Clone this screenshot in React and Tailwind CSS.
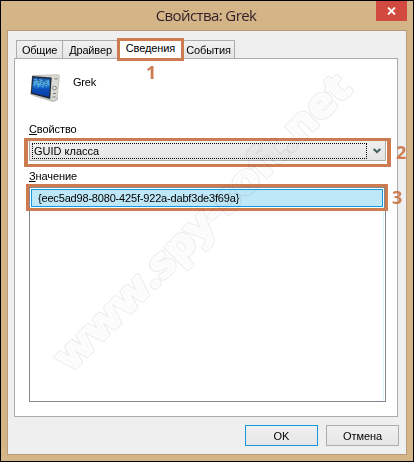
import React from "react";

const ui = "font-['Liberation_Sans',sans-serif] text-[11px] leading-[14px] text-black whitespace-nowrap";

function DeviceIcon() {
  return (
    <svg width="30" height="30" viewBox="0 0 30 30" className="block">
      <defs>
        <linearGradient id="screen" x1="0" y1="0" x2="0" y2="1">
          <stop offset="0" stopColor="#174c9c" />
          <stop offset="0.4" stopColor="#2a86d6" />
          <stop offset="0.6" stopColor="#0c50b8" />
          <stop offset="1" stopColor="#083aa6" />
        </linearGradient>
      </defs>
      <path d="M3 22l20 6 5-2v-3z" fill="#c4c4c4" />
      <path d="M2.5 1.5L28 .8q1.5 0 1.3 2L27 25l-3 2L.8 20.5z" fill="#dadad4" stroke="#b0b0aa" strokeWidth="0.7" />
      <path d="M2.2 2l19.5 1.4L20.2 25 .8 19.8z" fill="#202634" />
      <path d="M3.2 3.2l17 1.5L19 23 2 18.4z" fill="url(#screen)" />
      <path d="M4 4.5h3v2h2V5h4v3h2V6h4v6l-2-2v3l-3-3-1 4-3-3-2 3-1-5-3 3z" fill="#64bce5" opacity="0.7" />
      <path d="M5 4v4m4-4v6m3-5v8m4-7v6" stroke="#102c70" strokeWidth="1" strokeDasharray="1 1" />
      <circle cx="24.5" cy="14" r="1.8" fill="#f2f2ee" stroke="#777" />
      <path d="M24.5 5l3-.3M23 19.5h3M22.5 23h3" stroke="#777" />
    </svg>
  );
}

function Watermark() {
  const text = {
    transform: "translate(69.5 372) rotate(-45)",
    textLength: 400,
    lengthAdjust: "spacingAndGlyphs",
    strokeLinejoin: "round",
    className: "font-['Open_Sans',sans-serif] text-[40px] font-bold",
  };
  return (
    <svg width="414" height="462" className="pointer-events-none absolute top-0 left-0 mix-blend-multiply">
      <text {...text} fill="#ebebeb" stroke="#ebebeb" strokeWidth="3.8">
        www.spy-soft.net
      </text>
      <text {...text} fill="#fbfbfb" stroke="#fdfdfd" strokeWidth="2">
        www.spy-soft.net
      </text>
    </svg>
  );
}

const mark = "font-['Open_Sans',sans-serif] text-[18px] leading-[18px] font-bold text-[#cd7c52]";
const tab = "h-[18px] border border-b-0 border-[#acacac] bg-linear-to-b from-[#f1f1f1] to-[#e6e6e6] pt-[2px] text-center";

export default function App() {
  return (
    <div className={`relative h-[462px] w-[414px] overflow-hidden border border-black bg-[#d4b587] ${ui}`}>
      <header className="relative flex h-[29px] justify-center pt-[3px] pr-[2px]">
        <h1 className="font-['Open_Sans',sans-serif] text-[15px] leading-[22px] tracking-[-0.6px] text-[#35212b]">
          Свойства: Grek
        </h1>
        <button className="absolute top-0 right-[6px] flex h-5 w-[31px] items-center justify-center bg-[#d2493f]">
          <svg width="9" height="8" viewBox="0 0 9 8">
            <path d="M1 .5l7 7M8 .5l-7 7" stroke="#fff" strokeWidth="1.8" />
          </svg>
        </button>
      </header>

      <main className="ml-[6px] h-[425px] w-[400px] border border-[#b99b79] bg-[#efefef] px-[6px] pt-[9px]">
        <nav className="flex h-[18px] pl-[2px]">
          <div className={`${tab} w-[47px] tracking-[-0.2px]`}>Общие</div>
          <div className={`${tab} -ml-px w-[57px] tracking-[-0.15px]`}>Драйвер</div>
          <div className="relative z-10 -mt-[2px] -ml-[2px] h-[23px] w-[67px] border-[3px] border-[#cd7c52] bg-white text-center tracking-[-0.1px]">
            Сведения
          </div>
          <div className={`${tab} -ml-px w-[52px] border-l-0 tracking-[-0.1px]`}>События</div>
        </nav>

        <section className="h-[359px] w-[384px] border border-[#acacac] bg-white">
          <div className="flex h-[61px] pt-[15px] pl-[15px]">
            <DeviceIcon />
            <span className="w-[74px] pt-px pl-[13px] tracking-[-0.2px]">Grek</span>
            <span className={`${mark} -mt-[11px] pl-[12px]`}>1</span>
          </div>
          <div className="h-[18px] pt-[2px] pl-[14px] tracking-[-0.1px]">
            <span className="underline underline-offset-1">С</span>войство
          </div>
          <div className="flex pl-[9px]">
            <div className="h-[29px] w-[367px] border-x-4 border-y-[3px] border-[#cd7c52] px-px">
              <div className="flex h-5 border border-t-0 border-[#acacac] bg-linear-to-b from-[#efefef] to-[#e5e5e5] pt-[2px] pl-[2px]">
                <div className="h-4 w-[335px] border border-dotted border-black pl-px">
                  GUID класса
                </div>
                <svg width="8" height="6" viewBox="0 0 8 6" className="mt-[5px] -mr-1 ml-[6px] shrink-0">
                  <path d="M.7 1L4 4.2 7.3 1" fill="none" stroke="#405d5d" strokeWidth="2" />
                </svg>
              </div>
            </div>
            <span className={`${mark} relative z-10 mt-[5px] ml-[5px] w-0`}>2</span>
          </div>
          <div className="h-[17px] pt-[2px] pl-[14px] tracking-[-0.1px]">
            <span className="underline underline-offset-1">З</span>начение
          </div>
          <div className="flex h-[218px] pl-[11px]">
            <div className="w-[362px]">
              <div className="h-[27px] border-[3px] border-[#cd7c52]">
                <div className="h-[21px] border border-b-0 border-[#828790] bg-white px-px pt-px">
                  <div className="h-[18px] border border-[#1499df] bg-[#bee8f8] pt-[1px] pl-[6px] tracking-[-0.18px]">
                    {"{eec5ad98-8080-425f-922a-dabf3de3f69a}"}
                  </div>
                </div>
              </div>
              <div className="ml-[3px] h-[191px] w-[357px] border border-t-0 border-[#828790] pr-px">
                <div className="h-full border-r border-[#dcf7fa]" />
              </div>
            </div>
            <span className={`${mark} relative z-10 mt-[4px] ml-[4px] w-0`}>3</span>
          </div>
        </section>

        <footer className="-mr-px flex justify-end gap-2 pt-2">
          <button className="h-[21px] w-[73px] border border-[#1499df] bg-linear-to-b from-[#f0f0f0] to-[#e6e6e6]">OK</button>
          <button className="mr-[2px] h-[21px] w-[73px] border border-[#acacac] bg-linear-to-b from-[#f0f0f0] to-[#e6e6e6] tracking-[-0.1px]">Отмена</button>
        </footer>
      </main>
      <Watermark />
    </div>
  );
}
